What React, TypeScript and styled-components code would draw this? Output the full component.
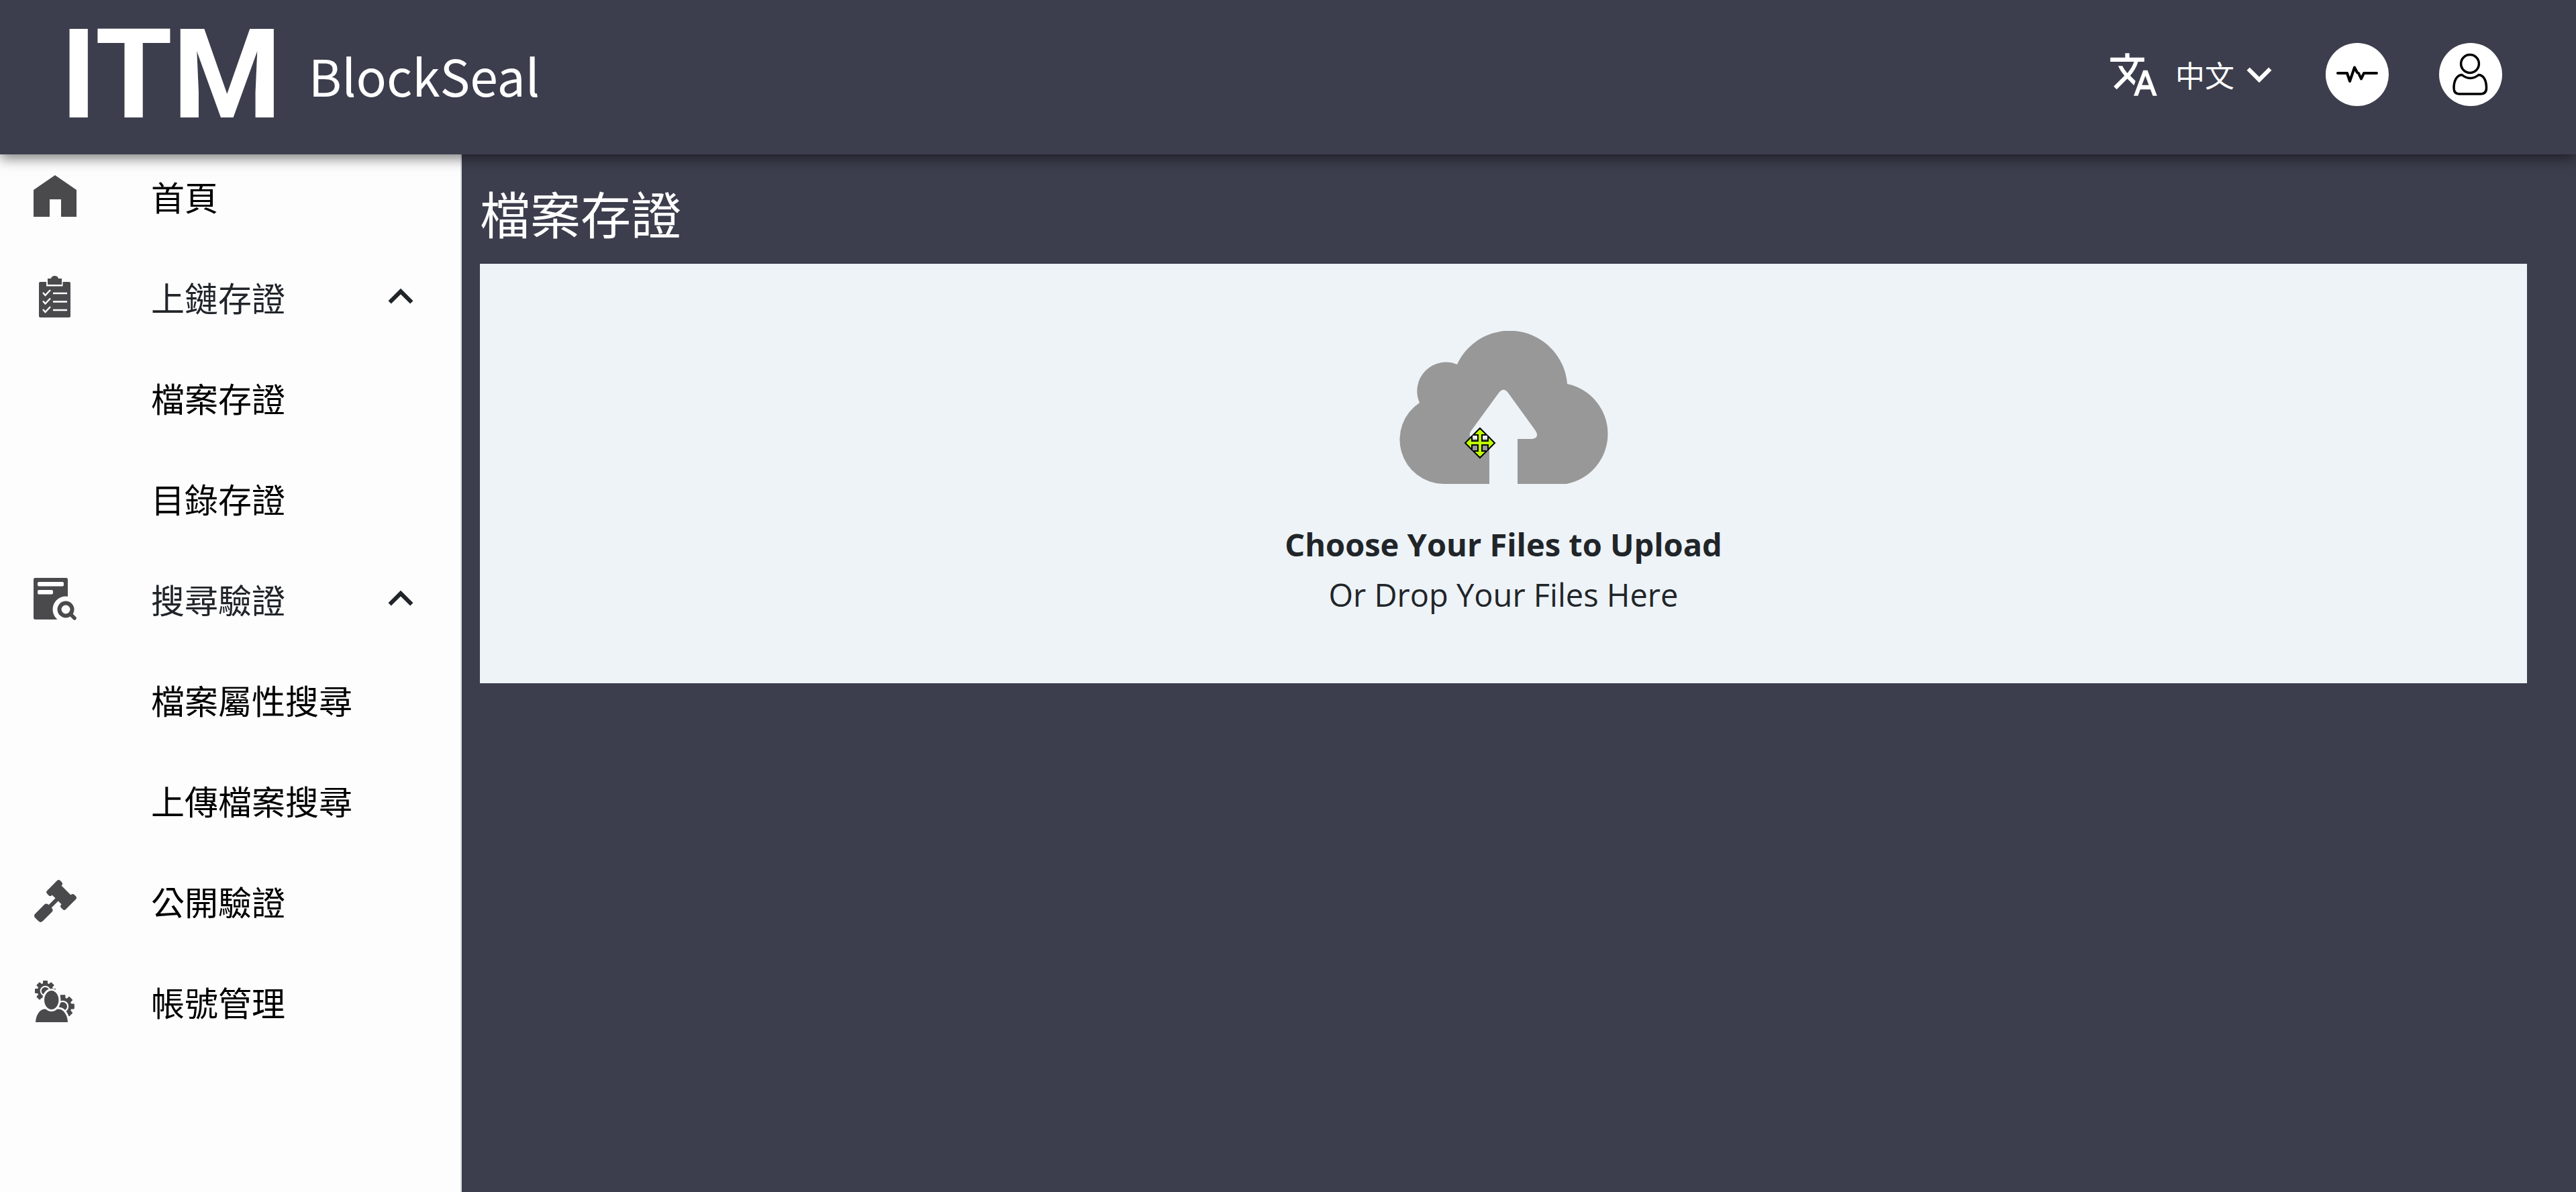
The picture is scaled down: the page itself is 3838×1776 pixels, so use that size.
import React from "react";
import styled, { createGlobalStyle } from "styled-components";
import { MdExpandLess, MdExpandMore, MdTranslate } from "react-icons/md";
import { FaGavel } from "react-icons/fa";

const cjk = `"Noto Sans CJK TC", "Noto Sans", sans-serif`;

const GlobalStyle = createGlobalStyle`
  * { box-sizing: border-box; }
  body { margin: 0; background: #3c3e4d; font-family: ${cjk}; }
`;

const Page = styled.div`
  display: flex;
  flex-direction: column;
  min-height: 100vh;
`;

const Header = styled.header`
  position: relative;
  z-index: 1;
  display: flex;
  align-items: center;
  justify-content: space-between;
  height: 230px;
  padding: 0 110px 8px 90px;
  color: #fff;
  background: #3c3e4d;
  box-shadow: 0 6px 18px rgba(0, 0, 0, 0.5);
`;

const Brand = styled.a`
  display: flex;
  align-items: center;
  gap: 40px;
  color: inherit;
  text-decoration: none;
`;

const Mark = styled.span`
  font-family: Roboto, sans-serif;
  font-size: 186px;
  font-weight: 700;
  line-height: 220px;
`;

const Product = styled.span`
  font-size: 75px;
`;

const Tools = styled.div`
  display: flex;
  align-items: center;
  gap: 62px;
`;

const Shortcuts = styled.div`
  display: flex;
  gap: 75px;
`;

const LanguageButton = styled.button`
  display: flex;
  align-items: center;
  gap: 24px;
  padding: 0;
  border: 0;
  color: inherit;
  background: none;
  font: 44px ${cjk};
`;

const LanguageName = styled.span`
  display: flex;
  align-items: center;
`;

const RoundButton = styled.button`
  display: grid;
  place-items: center;
  width: 94px;
  height: 94px;
  padding: 0;
  border: 0;
  border-radius: 50%;
  color: #000;
  background: #fff;
`;

const Body = styled.div`
  display: flex;
  flex: 1;
`;

const Sidebar = styled.nav`
  width: 688px;
  flex: none;
  background: #fdfdfe;
  border-right: 2px solid #d9d9e0;
`;

const Menu = styled.ul`
  display: flex;
  flex-direction: column;
  gap: 22px;
  margin: 0;
  padding: 0;
  list-style: none;
`;

const itemLayout = `
  display: grid;
  grid-template-columns: 64px 1fr 74px;
  column-gap: 111px;
  align-items: center;
  width: 100%;
  height: 128px;
  padding: 0 52px 4px 50px;
  border: 0;
  background: none;
  font: 50px ${cjk};
  text-align: left;
`;

const ItemLink = styled.a`
  ${itemLayout}
  color: #000;
  text-decoration: none;
`;

const GroupButton = styled.button`
  ${itemLayout}
  color: #212529;
`;

const ItemIcon = styled.span`
  display: grid;
  place-items: center;
  color: #4a4a4c;
`;

const Label = styled.span`
  white-space: nowrap;
`;

const Main = styled.main`
  flex: 1;
  padding: 32px 73px 75px 27px;
`;

const Title = styled.h1`
  margin: 0 0 21px;
  color: #fff;
  font-size: 75px;
  font-weight: 400;
  line-height: 110px;
`;

const DropZone = styled.label`
  display: flex;
  flex-direction: column;
  align-items: center;
  padding: 100px 0 94px;
  color: #212529;
  background: #edf3f7;
  font-family: "Open Sans", "Noto Sans", sans-serif;
  font-size: 47px;
  line-height: 75px;
`;

const FileInput = styled.input`
  position: absolute;
  width: 1px;
  height: 1px;
  opacity: 0;
`;

const Picture = styled.span`
  position: relative;
  display: block;
  height: 228px;
  margin-bottom: 53px;
`;

const Pointer = styled.svg`
  position: absolute;
  left: 97px;
  top: 143px;
`;

function HomeIcon() {
  return (
    <svg width="64" height="64" viewBox="0 0 64 64" fill="currentColor">
      <path d="M32 1 64 23V63H41V37H24V63H0V23Z" />
    </svg>
  );
}

function ClipboardIcon() {
  return (
    <svg width="64" height="64" viewBox="0 0 64 64" fill="none">
      <path fill="currentColor" d="M10 10H19V16.5H43.500V10H53Q55 10 55 12V61Q55 63 53 63H10Q8 63 8 61V12Q8 10 10 10Z" />
      <path fill="currentColor" d="M21 5H26Q27 1 31.500 1T37 5H42V14H21Z" />
      <g stroke="#fff" strokeWidth="2.400">
        <path d="M29 27H50M29 39.500H50M29 52H50" />
        <path d="M14 26 17.500 30 25 22M14 38.500 17.500 42.500 25 34.500M14 51 17.500 55 25 47" />
      </g>
    </svg>
  );
}

function SearchDocIcon() {
  return (
    <svg width="64" height="64" viewBox="0 0 64 64" fill="none">
      <rect x="0" y="1" width="51" height="62" rx="2.500" fill="currentColor" />
      <rect x="6" y="7" width="39" height="6.500" rx="2" fill="#fff" />
      <rect x="6" y="19" width="23" height="6.500" rx="2" fill="#fff" />
      <circle cx="48" cy="48" r="19.500" fill="#fdfdfe" />
      <circle cx="48" cy="48" r="9.500" stroke="currentColor" strokeWidth="6" />
      <path d="M55 55 61 61" stroke="currentColor" strokeWidth="5.500" strokeLinecap="round" />
    </svg>
  );
}

const teeth = [0, 45, 90, 135, 180, 225, 270, 315];

function Gear({ x, y, scale }: { x: number; y: number; scale: number }) {
  return (
    <g transform={`translate(${x} ${y}) scale(${scale})`}>
      {teeth.map((angle) => (
        <rect key={angle} x="-3.500" y="-15.500" width="7" height="8" rx="1" transform={`rotate(${angle})`} fill="currentColor" />
      ))}
      <circle r="9.800" stroke="currentColor" strokeWidth="4" fill="#fdfdfe" />
      <circle r="5.800" fill="currentColor" />
    </g>
  );
}

function AccountsIcon() {
  return (
    <svg width="64" height="64" viewBox="0 0 64 64" fill="none">
      <Gear x={17.5} y={16.5} scale={1} />
      <Gear x={43.5} y={39.5} scale={1.12} />
      <g fill="currentColor" stroke="#fdfdfe" strokeWidth="3">
        <path d="M1.500 64.500C1.500 52 8 42 17 42H37C46 42 52.500 52 52.500 64.500Z" />
        <ellipse cx="26.700" cy="30" rx="12.200" ry="15.500" />
      </g>
    </svg>
  );
}

function PulseIcon() {
  return (
    <svg width="64" height="64" viewBox="0 0 64 64" fill="none" stroke="currentColor" strokeWidth="4" strokeLinecap="round" strokeLinejoin="round">
      <path d="M3 30H17L21 42 28 21.500 32 29 34 30 38 38.500 42 30H61" />
    </svg>
  );
}

function PersonIcon() {
  return (
    <svg width="64" height="64" viewBox="0 0 64 64" fill="none" stroke="currentColor" strokeWidth="3.500" strokeLinejoin="round">
      <circle cx="31" cy="16" r="13.400" />
      <path d="M19 32.500C11 33 7 42 7 52Q7 61 15 61H47Q55.500 61 55.500 52C55.500 42 52 33 44 32.500Q38 37.500 31.500 37.500T19 32.500Z" />
    </svg>
  );
}

function CloudIcon() {
  return (
    <svg width="312" height="228" viewBox="0 0 312 228">
      <path
        fill="#989898"
        d="M66 228A66 66 0 0 1 31 107A43 43 0 0 1 87 50A86 86 0 0 1 251 79A76 76 0 0 1 250 228H177V161H199Q210 159 204 149L162 91Q156 84 150 91L107 150Q103 159 112 161H135V228Z"
      />
    </svg>
  );
}

function MoveCursor() {
  return (
    <Pointer width="48" height="48" viewBox="0 0 48 48">
      <path
        fill="#c0ff00"
        stroke="#000"
        strokeWidth="2"
        d="M24 2 34 12H27V21H36V14L46 24 36 34V27H27V36H34L24 46 14 36H21V27H12V34L2 24 12 14V21H21V12H14Z"
      />
    </Pointer>
  );
}

type Entry = { label: string; icon?: React.ReactNode; group?: boolean };

const entries: Entry[] = [
  { label: "首頁", icon: <HomeIcon /> },
  { label: "上鏈存證", icon: <ClipboardIcon />, group: true },
  { label: "檔案存證" },
  { label: "目錄存證" },
  { label: "搜尋驗證", icon: <SearchDocIcon />, group: true },
  { label: "檔案屬性搜尋" },
  { label: "上傳檔案搜尋" },
  { label: "公開驗證", icon: <FaGavel size={63} /> },
  { label: "帳號管理", icon: <AccountsIcon /> },
];

function MenuEntry({ label, icon, group }: Entry) {
  return (
    <li>
      {group ? (
        <GroupButton type="button" aria-expanded="true">
          <ItemIcon>{icon}</ItemIcon>
          <Label>{label}</Label>
          <MdExpandLess size={74} />
        </GroupButton>
      ) : (
        <ItemLink href="#">
          <ItemIcon>{icon}</ItemIcon>
          <Label>{label}</Label>
        </ItemLink>
      )}
    </li>
  );
}

export default function App() {
  return (
    <Page>
      <GlobalStyle />
      <Header>
        <Brand href="#">
          <Mark>ITM</Mark>
          <Product>BlockSeal</Product>
        </Brand>
        <Tools>
          <LanguageButton type="button">
            <MdTranslate size={76} />
            <LanguageName>
              中文
              <MdExpandMore size={74} />
            </LanguageName>
          </LanguageButton>
          <Shortcuts>
            <RoundButton type="button" aria-label="Activity">
              <PulseIcon />
            </RoundButton>
            <RoundButton type="button" aria-label="Account">
              <PersonIcon />
            </RoundButton>
          </Shortcuts>
        </Tools>
      </Header>
      <Body>
        <Sidebar>
          <Menu>
            {entries.map((entry) => (
              <MenuEntry key={entry.label} {...entry} />
            ))}
          </Menu>
        </Sidebar>
        <Main>
          <Title>檔案存證</Title>
          <DropZone>
            <FileInput type="file" multiple />
            <Picture>
              <CloudIcon />
              <MoveCursor />
            </Picture>
            <strong>Choose Your Files to Upload</strong>
            <span>Or Drop Your Files Here</span>
          </DropZone>
        </Main>
      </Body>
    </Page>
  );
}
